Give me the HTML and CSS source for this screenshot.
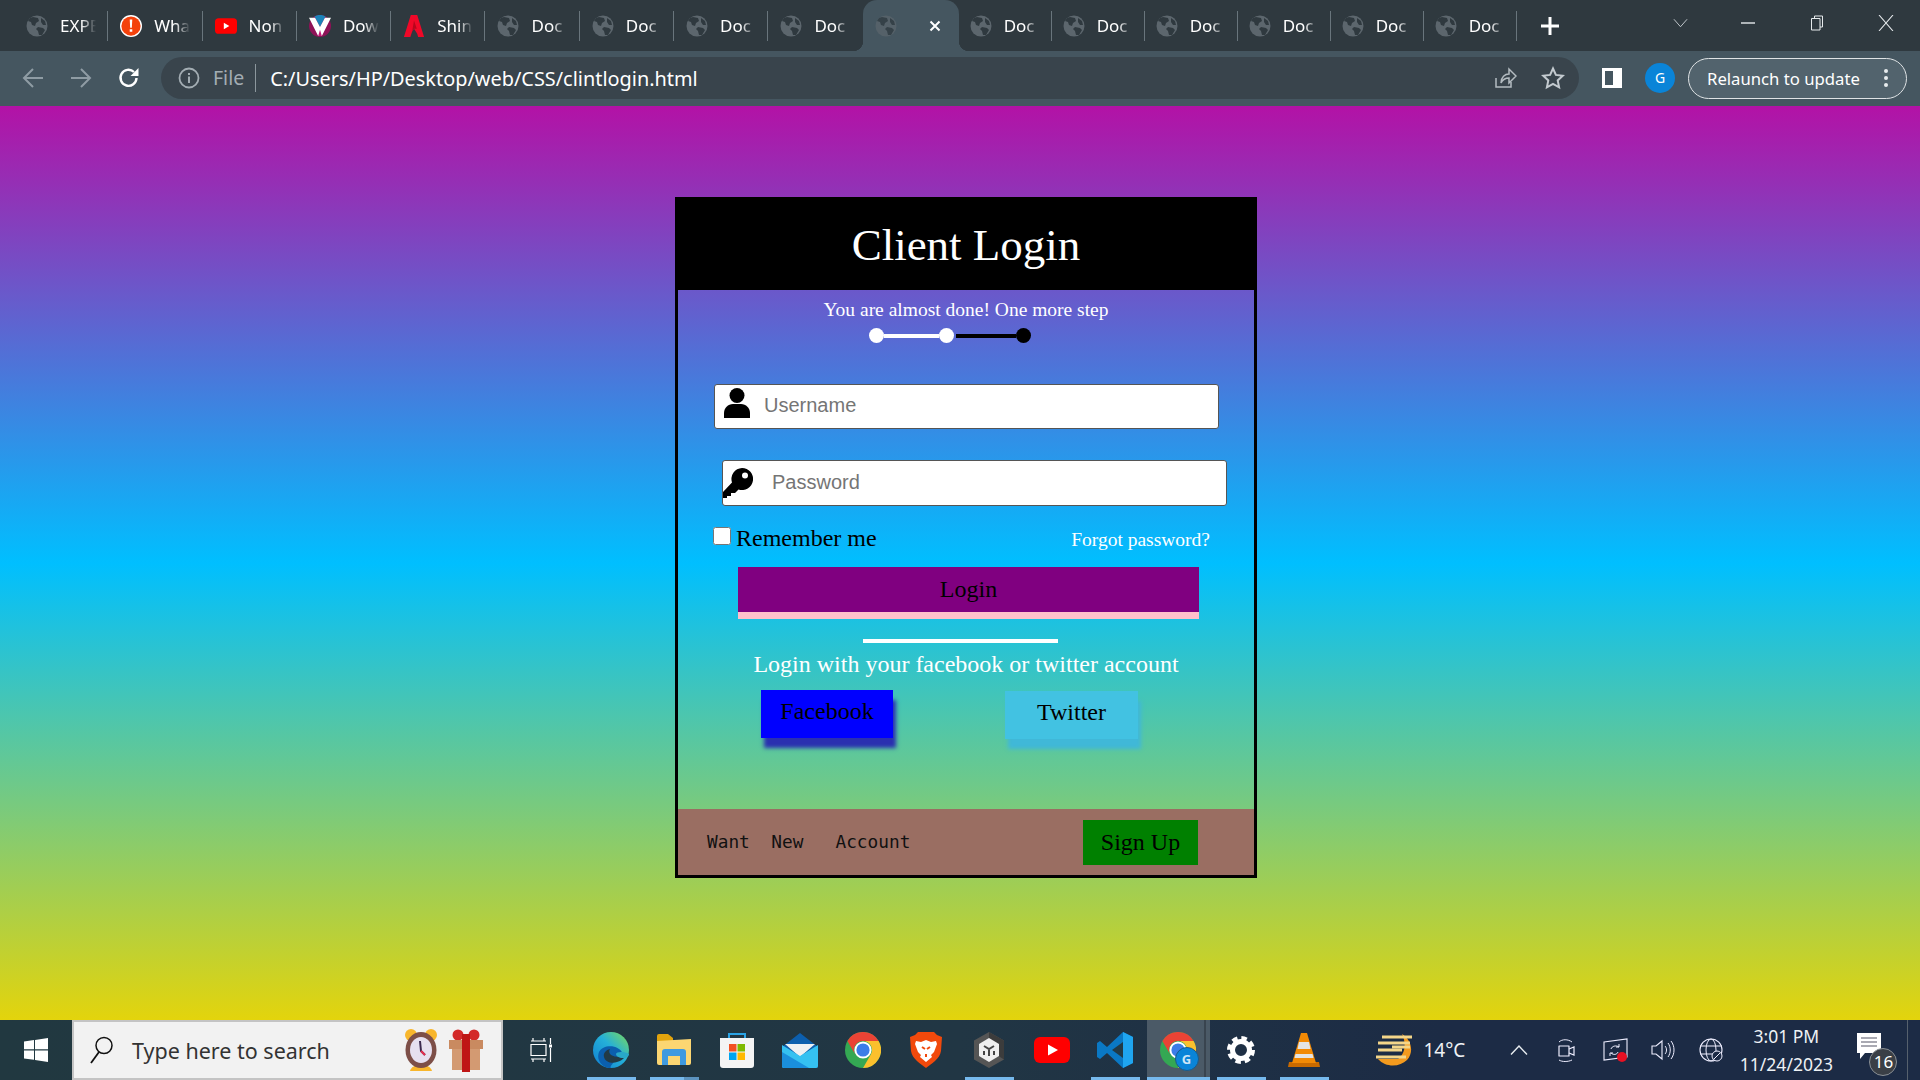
FILE: index.html
```html
<!DOCTYPE html>
<html>
<head>
    <title>Client Login</title>
    <link rel="stylesheet" href="styles.css">
</head>
<body>
    <svg class="defs" width="0" height="0">
        <symbol id="globe" viewBox="0 0 22 22">
            <circle cx="11" cy="11" r="10.5" fill="#5c666d"/>
            <path d="M7 2l5 1 1 3-3 2-1 3-3-1-1-3-3-1 2-3zM12 12l5 1 2 2-3 5-3 0-1-4-2-2zM15 3l4 3 1 4-3 0-2-3z" fill="#2f393f"/>
        </symbol>
        <symbol id="chrome" viewBox="0 0 36 36">
            <circle cx="18" cy="18" r="18" fill="#34a853"/>
            <path d="M33.6 9A18 18 0 0 1 18 36L25.8 22.5A9 9 0 0 0 18 9Z" fill="#fbc02d"/>
            <path d="M18 9H33.6A18 18 0 0 0 2.4 9L10.2 22.5A9 9 0 0 1 18 9Z" fill="#ea4335"/>
            <circle cx="18" cy="18" r="8.6" fill="#fff"/>
            <circle cx="18" cy="18" r="6.6" fill="#3b7de8"/>
        </symbol>
    </svg>

    <div class="tabstrip">
        <div class="tab"><svg class="favicon"><use href="#globe"/></svg><span class="tab-title">EXPE</span></div>
        <div class="tab">
            <svg class="favicon" viewBox="0 0 24 24"><circle cx="12" cy="12" r="12" fill="#fff"/><circle cx="12" cy="12" r="10.5" fill="#f4410b"/><path d="M10.6 5h2.8l-.5 9h-1.8zM10.6 15.6h2.8v2.8h-2.8z" fill="#fff"/></svg>
            <span class="tab-title">Wha</span>
        </div>
        <div class="tab">
            <svg class="favicon" viewBox="0 0 24 24"><rect y="3.5" width="24" height="17" rx="4" fill="#f00"/><path d="M9.6 8.5l6 3.5-6 3.5z" fill="#fff"/></svg>
            <span class="tab-title">Non</span>
        </div>
        <div class="tab">
            <svg class="favicon" viewBox="0 0 24 24"><circle cx="12" cy="12" r="12" fill="#8e1257"/><path d="M6 1.6a12 12 0 0 1 12 0L12 13z" fill="#1b83b8"/><path d="M0 3h6.6L12 13l5.4-10H24L14 23h-4z" fill="#fff"/><path d="M12 16l2 7h-4z" fill="#c51a78"/></svg>
            <span class="tab-title">Dow</span>
        </div>
        <div class="tab">
            <svg class="favicon" viewBox="0 0 22 24"><path d="M7.5 0h7L22 24h-6.5l-1-3.5L11 15l-2 3-2 6H0z" fill="#f00828"/><path d="M11 6l3 9-3 0-2 3z" fill="#b8051c"/></svg>
            <span class="tab-title">Shin</span>
        </div>
        <div class="tab"><svg class="favicon"><use href="#globe"/></svg><span class="tab-title">Doc</span></div>
        <div class="tab"><svg class="favicon"><use href="#globe"/></svg><span class="tab-title">Doc</span></div>
        <div class="tab"><svg class="favicon"><use href="#globe"/></svg><span class="tab-title">Doc</span></div>
        <div class="tab tab-last"><svg class="favicon"><use href="#globe"/></svg><span class="tab-title">Doc</span></div>
        <div class="tab tab-active">
            <svg class="favicon"><use href="#globe"/></svg>
            <svg class="tab-close" viewBox="0 0 12 12"><path d="M1.5 1.5l9 9M10.5 1.5l-9 9" stroke="#fff" stroke-width="2"/></svg>
        </div>
        <div class="tab"><svg class="favicon"><use href="#globe"/></svg><span class="tab-title">Doc</span></div>
        <div class="tab"><svg class="favicon"><use href="#globe"/></svg><span class="tab-title">Doc</span></div>
        <div class="tab"><svg class="favicon"><use href="#globe"/></svg><span class="tab-title">Doc</span></div>
        <div class="tab"><svg class="favicon"><use href="#globe"/></svg><span class="tab-title">Doc</span></div>
        <div class="tab"><svg class="favicon"><use href="#globe"/></svg><span class="tab-title">Doc</span></div>
        <div class="tab"><svg class="favicon"><use href="#globe"/></svg><span class="tab-title">Doc</span></div>
        <svg class="new-tab" viewBox="0 0 18 18"><path d="M9 0v18M0 9h18" stroke="#fff" stroke-width="3"/></svg>
        <svg class="tab-search" viewBox="0 0 16 10"><path d="M1 1l7 8 7-8" fill="none" stroke="#c8ced2" stroke-width="1"/></svg>
        <svg class="win-btn" viewBox="0 0 16 16"><path d="M1 8h14" stroke="#e6eaec" stroke-width="1.4"/></svg>
        <svg class="win-btn" viewBox="0 0 16 16"><path d="M5.5 3V1h8v11h-2.5M2.5 3.5h8.500v11.500h-8.500z" fill="none" stroke="#e6eaec" stroke-width="1"/></svg>
        <svg class="win-btn" viewBox="0 0 16 16"><path d="M1 0l14 16M15 0L1 16" stroke="#e6eaec" stroke-width="1.1"/></svg>
    </div>

    <div class="toolbar">
        <svg class="nav-icon" viewBox="0 0 22 22"><path d="M21 11H2M11 2l-9 9 9 9" fill="none" stroke="#8f9ca4" stroke-width="2"/></svg>
        <svg class="nav-icon" viewBox="0 0 22 22"><path d="M1 11h19M11 2l9 9-9 9" fill="none" stroke="#8f9ca4" stroke-width="2"/></svg>
        <svg class="nav-icon" viewBox="0 0 22 22"><path d="M18.5 11a8 8 0 1 1-2.500-6" fill="none" stroke="#fff" stroke-width="2.4"/><path d="M20.5 1v8h-8z" fill="#fff"/></svg>
        <div class="omnibox">
            <svg class="info-icon" viewBox="0 0 22 22"><circle cx="11" cy="11" r="9.5" fill="none" stroke="#a3adb3" stroke-width="1.8"/><path d="M10 9.500h2V16h-2zM10 6h2v2h-2z" fill="#a3adb3"/></svg>
            <span class="scheme">File</span>
            <span class="url">C:/Users/HP/Desktop/web/CSS/clintlogin.html</span>
            <svg class="share-icon" viewBox="0 0 24 24"><path d="M3 12v9h15v-5" fill="none" stroke="#b4bcc1" stroke-width="1.5"/><path d="M8 17c0-6 4-9 8-9V3l7 7-7 7v-5c-3 0-6 1-8 5z" fill="none" stroke="#b4bcc1" stroke-width="1.5"/></svg>
            <svg class="star-icon" viewBox="0 0 24 24"><path d="M12 2.500l2.900 6.400 6.900.8-5.100 4.700 1.400 6.900-6.100-3.500-6.100 3.500 1.400-6.900-5.100-4.700 6.900-.8z" fill="none" stroke="#c3cacf" stroke-width="2"/></svg>
        </div>
        <svg class="panel-icon" viewBox="0 0 20 20"><path d="M0 0h20v20H0z" fill="#fff"/><path d="M3 3h8v14H3z" fill="#455660"/></svg>
        <div class="avatar">G</div>
        <div class="relaunch">
            <span>Relaunch to update</span>
            <svg class="dots" viewBox="0 0 4 18"><circle cx="2" cy="2" r="2" fill="#e8ecee"/><circle cx="2" cy="9" r="2" fill="#e8ecee"/><circle cx="2" cy="16" r="2" fill="#e8ecee"/></svg>
        </div>
    </div>

    <main class="page">
        <div class="card">
            <h1 class="card-title">Client Login</h1>
            <div class="card-body">
                <p class="step-text">You are almost done! One more step</p>
                <div class="steps">
                    <span class="dot"></span>
                    <span class="bar bar-done"></span>
                    <span class="dot"></span>
                    <span class="bar bar-todo"></span>
                    <span class="dot dot-todo"></span>
                </div>
                <div class="field field-user">
                    <svg class="field-icon user-icon" viewBox="0 0 26 30"><circle cx="13" cy="7.500" r="7.500"/><path d="M0 30v-5c0-5 4-9 9-9h8c5 0 9 4 9 9v5z"/></svg>
                    <input type="text" placeholder="Username">
                </div>
                <div class="field field-pass">
                    <svg class="field-icon key-icon" viewBox="0 0 30 30"><path d="M19 0a11 11 0 1 1-3.500 21.400L12 25H8v3H4v2H0v-6l9-9.500A11 11 0 0 1 19 0z"/><circle cx="22" cy="7.500" r="3" fill="#fff"/></svg>
                    <input type="password" placeholder="Password">
                </div>
                <div class="options">
                    <label class="remember"><input type="checkbox">Remember me</label>
                    <a class="forgot">Forgot password?</a>
                </div>
                <button class="login-btn" type="button">Login</button>
                <div class="divider"></div>
                <p class="social-text">Login with your facebook or twitter account</p>
                <div class="social">
                    <button class="fb-btn" type="button">Facebook</button>
                    <button class="tw-btn" type="button">Twitter</button>
                </div>
            </div>
            <div class="card-footer">
                <span class="want">Want  New   Account</span>
                <button class="signup-btn" type="button">Sign Up</button>
            </div>
        </div>
    </main>

    <div class="taskbar">
        <div class="start">
            <svg class="win-logo" viewBox="0 0 24 24"><path d="M0 3.500l10-1.400v9.200H0zM11 2l13-2v11.300H11zM0 12.400h10v9.400L0 20.400zM11 12.400h13V24l-13-2z" fill="#fff"/></svg>
        </div>
        <div class="search">
            <svg class="search-icon" viewBox="0 0 26 30"><circle cx="15" cy="10.500" r="8" fill="none" stroke="#111" stroke-width="1.5"/><path d="M10 17L2 28" stroke="#111" stroke-width="1.8"/></svg>
            <span class="search-text">Type here to search</span>
            <svg class="alarm" viewBox="0 0 34 44">
                <circle cx="7" cy="7" r="6" fill="#f8b62c"/><circle cx="27" cy="7" r="6" fill="#f8b62c"/>
                <path d="M6 43c1-4 5-6 11-6s10 2 11 6z" fill="#f8b62c"/>
                <ellipse cx="17" cy="22" rx="15.500" ry="18" fill="#7d4f48"/>
                <ellipse cx="17" cy="22" rx="11" ry="13" fill="#e6e0f0"/>
                <path d="M16 13l1 10 4 4" fill="none" stroke="#3b2a50" stroke-width="2"/><path d="M17 23l4 4" stroke="#e83050" stroke-width="2"/>
            </svg>
            <svg class="gift" viewBox="0 0 34 44">
                <circle cx="9" cy="7" r="5.500" fill="#d32a2a"/><circle cx="25" cy="7" r="5.500" fill="#d32a2a"/>
                <path d="M3 16h28v26H3z" fill="#d39a72"/><path d="M0 12h34v9H0z" fill="#c98a60"/>
                <path d="M13 6h8v38h-8z" fill="#bf1616"/>
            </svg>
        </div>
        <div class="task-view">
            <svg class="taskview-icon" viewBox="0 0 24 24"><path d="M2 3h15M4 0v3M15 0v3M2 6.500h15v11H2zM2 21h15M4 21v3M15 21v3M21.500 0v6M21.500 10v14" fill="none" stroke="#fff" stroke-width="1.2"/><path d="M20 6.500h3v3h-3z" fill="#fff"/></svg>
        </div>

        <div class="slot slot-on">
            <svg class="app" viewBox="0 0 36 36">
                <defs><linearGradient id="edgeGrad" x1="0" y1="1" x2="1" y2="0"><stop offset="0" stop-color="#0f7fd2"/><stop offset=".55" stop-color="#25b0d8"/><stop offset="1" stop-color="#7fdc55"/></linearGradient></defs>
                <circle cx="18" cy="18" r="18" fill="url(#edgeGrad)"/>
                <path d="M6 20c4-8 20-8 24 2 1 3-2 5-6 4-3 4-8 9-6 10C9 36 3 28 6 20z" fill="#0b5fae"/>
                <path d="M17 17c-4 1-7 4-6 8 1 5 8 7 13 5 4-1 8-4 9-7-1 1-4 2-7 2-6 0-12-3-9-8z" fill="#223a46"/>
                <path d="M36 22c0 2-2 4-6 4s-7-2-7-4 7-3 13 0z" fill="#28a8c8"/>
            </svg>
        </div>
        <div class="slot slot-on slot-grouped">
            <svg class="app" viewBox="0 0 36 36">
                <path d="M1 4a2 2 0 0 1 2-2h9l5 4v5H1z" fill="#e2a40d"/>
                <path d="M1 9l34-2v24a2 2 0 0 1-2 2H3a2 2 0 0 1-2-2z" fill="#fcd672"/>
                <path d="M6 33V20a3 3 0 0 1 3-3h18a3 3 0 0 1 3 3v13h-6V24H12v9z" fill="#3f9ae0"/>
            </svg>
        </div>
        <div class="slot">
            <svg class="app" viewBox="0 0 36 36">
                <path d="M10 8V2h16v6" fill="none" stroke="#2ba4e6" stroke-width="2"/>
                <path d="M1 6h34v27a3 3 0 0 1-3 3H4a3 3 0 0 1-3-3z" fill="#f4f4f4"/>
                <path d="M10 12h7.500v7.500H10z" fill="#f25022"/><path d="M18.500 12H26v7.500h-7.500z" fill="#7fba00"/>
                <path d="M10 20.500h7.500V28H10z" fill="#00a4ef"/><path d="M18.500 20.500H26V28h-7.500z" fill="#ffb900"/>
            </svg>
        </div>
        <div class="slot">
            <svg class="app" viewBox="0 0 36 36">
                <path d="M0 15L18 1l18 14v19a2 2 0 0 1-2 2H2a2 2 0 0 1-2-2z" fill="#0c5fae"/>
                <path d="M3 12h30L18 25z" fill="#eef0f2"/>
                <path d="M0 13l18 11 18-11v21a2 2 0 0 1-2 2H2a2 2 0 0 1-2-2z" fill="#35c1f1"/>
                <path d="M0 20l27 16H2a2 2 0 0 1-2-2z" fill="#1a8fdc"/>
            </svg>
        </div>
        <div class="slot"><svg class="app"><use href="#chrome"/></svg></div>
        <div class="slot">
            <svg class="app" viewBox="0 0 32 36">
                <path d="M8 0h16l3 3 5 2-1 14c-1 8-10 13-15 17C11 32 2 27 1 19L0 5l5-2z" fill="#f1490c"/>
                <path d="M6 9l5 1 5-2 5 2 5-1 1 3-3 8-3 3 1 2-6 5-6-5 1-2-3-3-3-8z" fill="#fff"/>
                <path d="M12 15l3 2M20 15l-3 2M16 22v3" stroke="#f1490c" stroke-width="2"/>
            </svg>
        </div>
        <div class="slot slot-on">
            <svg class="app" viewBox="0 0 32 36">
                <path d="M16 0l15 8.500v19L16 36 1 27.500v-19z" fill="#555"/>
                <path d="M16 0l15 8.500v19L16 18z" fill="#3c3c3c"/>
                <path d="M16 6l10 6v12l-10 6-10-6V12z" fill="#eee"/>
                <path d="M16 16v8M11 14l5 3 5-3M11 19v4M21 19v4" stroke="#444" stroke-width="2" fill="none"/>
            </svg>
        </div>
        <div class="slot">
            <svg class="app" viewBox="0 0 36 26"><rect width="36" height="26" rx="6" fill="#f00"/><path d="M14 7.500l10 5.500-10 5.500z" fill="#fff"/></svg>
        </div>
        <div class="slot slot-on">
            <svg class="app" viewBox="0 0 36 36">
                <path d="M26 0l10 5v26l-10 5L10 21 3 27l-3-2v-14l3-2 7 6z" fill="#0a78c4"/>
                <path d="M26 10L15 18l11 8z" fill="#223a46"/>
                <path d="M26 0l10 5v26l-10 5z" fill="#1fa5f0"/>
            </svg>
        </div>
        <div class="slot slot-on slot-active">
            <svg class="app"><use href="#chrome"/></svg>
            <span class="profile-badge">G</span>
        </div>
        <div class="slot slot-on">
            <svg class="app-small" viewBox="0 0 28 28"><circle cx="14" cy="14" r="8.500" fill="none" stroke="#fff" stroke-width="5"/><circle cx="14" cy="14" r="12" fill="none" stroke="#fff" stroke-width="4" stroke-dasharray="5.5 3.925"/></svg>
        </div>
        <div class="slot slot-on">
            <svg class="app" viewBox="0 0 32 36">
                <path d="M1 30h30l1 5H0z" fill="#c96a00"/>
                <path d="M13 1h6l9 30H4z" fill="#f28a05"/>
                <path d="M11 10h10l1.500 7h-13zM7.500 22h17l1 4h-19z" fill="#e4e4e4"/>
            </svg>
        </div>

        <div class="weather">
            <svg class="weather-icon" viewBox="0 0 38 34">
                <path d="M26 1c10 6 12 19 5 26s-21 8-29-1h20c8-6 8-17 4-25z" fill="#f39a1e"/>
                <path d="M6 4h30M2 10h32M16 14h18M0 24h30" stroke="#f4d68a" stroke-width="3"/>
                <path d="M2 17h24" stroke="#f4d68a" stroke-width="3"/>
            </svg>
            <span class="temp">14°C</span>
        </div>
        <div class="tray tray-caret">
            <svg class="tray-chevron" viewBox="0 0 18 10"><path d="M1 9.500L9 1l8 8.500" fill="none" stroke="#e8edf0" stroke-width="1.4"/></svg>
        </div>
        <div class="tray tray-meet">
            <svg class="tray-icon" viewBox="0 0 18 24"><path d="M2 8h10v10H2z" fill="none" stroke="#eef" stroke-width="1.2" stroke-linejoin="round"/><path d="M12 11l5-2v8l-5-2" fill="none" stroke="#eef" stroke-width="1.2"/><path d="M2 4c3-3 9-3 13 0M2 22c3 2 9 2 13 0" fill="none" stroke="#eef" stroke-width="1"/></svg>
        </div>
        <div class="tray tray-sync">
            <svg class="tray-icon tray-wide" viewBox="0 0 26 24"><path d="M1 4l23-3v18L1 22z" fill="none" stroke="#eef" stroke-width="1.1"/><path d="M8 11c1-3 5-4 8-2M15 14c-1 3-5 3-7 1M16 6v3h-3M7 18v-3h3" fill="none" stroke="#eef" stroke-width="1"/><circle cx="19" cy="19" r="5" fill="#e81123"/></svg>
        </div>
        <div class="tray tray-sound">
            <svg class="tray-icon tray-wide" viewBox="0 0 24 24"><path d="M1 8h4l6-5v18l-6-5H1z" fill="none" stroke="#eef" stroke-width="1.1"/><path d="M14 8c2 2 2 6 0 8M17 5c3 4 3 10 0 14M20 3c4 5 4 13 0 18" fill="none" stroke="#eef" stroke-width="1"/></svg>
        </div>
        <div class="tray tray-globe">
            <svg class="tray-icon tray-wide" viewBox="0 0 24 24"><circle cx="12" cy="12" r="11" fill="none" stroke="#eef" stroke-width="1.1"/><ellipse cx="12" cy="12" rx="5" ry="11" fill="none" stroke="#eef" stroke-width="1"/><path d="M1 8h22M1 16h22" stroke="#eef" stroke-width="1"/><circle cx="18" cy="18" r="5" fill="#1c2b45" stroke="#eef"/><path d="M15 21l6-6" stroke="#eef"/></svg>
        </div>
        <div class="clock"><span>3:01 PM</span><span>11/24/2023</span></div>
        <div class="tray tray-notify">
            <svg class="notify-icon" viewBox="0 0 24 26"><path d="M0 0h24v20H8l-5 6v-6H0z" fill="#fff"/><path d="M4 5h16M4 9h16M4 13h16" stroke="#556" stroke-width="1.2"/></svg>
            <span class="notify-count">16</span>
        </div>
        <div class="show-desktop"></div>
    </div>
</body>
</html>
```

FILE: styles.css
```css
* {
    box-sizing: border-box;
}
html,
body {
    margin: 0;
    height: 100%;
}
body {
    display: flex;
    flex-direction: column;
    overflow: hidden;
    font-family: "Liberation Serif", serif;
}
.defs {
    position: absolute;
}

/* browser tabs */
.tabstrip {
    display: flex;
    align-items: center;
    flex: 0 0 51px;
    padding-left: 14px;
    background-color: #2f393f;
    font-family: "Noto Sans", sans-serif;
}
.tab {
    position: relative;
    display: flex;
    align-items: center;
    flex: 0 0 94.3px;
    height: 30px;
    padding-left: 12px;
    border-right: 1px solid #69757c;
    color: #fff;
    font-size: 17px;
}
.tab-last {
    border-right: none;
}
.favicon {
    flex: 0 0 22px;
    width: 22px;
    height: 22px;
}
.tab-title {
    width: 38px;
    margin-left: 12px;
    white-space: nowrap;
    -webkit-mask-image: linear-gradient(to right, #000 55%, transparent 95%);
    mask-image: linear-gradient(to right, #000 55%, transparent 95%);
}
.tab-active {
    flex: 0 0 96px;
    height: 51px;
    background-color: #455660;
    border-right: none;
    border-radius: 14px 14px 0 0;
}
.tab-active ~ .tab {
    flex-basis: 93px;
    padding-left: 11px;
}
.tab-active .favicon {
    opacity: 0.7;
}
.tab-active::before,
.tab-active::after {
    content: "";
    position: absolute;
    bottom: 0;
    width: 10px;
    height: 10px;
}
.tab-active::before {
    left: -10px;
    background: radial-gradient(circle at 0 0, transparent 10px, #455660 10.5px);
}
.tab-active::after {
    right: -10px;
    background: radial-gradient(circle at 100% 0, transparent 10px, #455660 10.5px);
}
.tab-close {
    width: 12px;
    height: 12px;
    margin-left: 32px;
}
.new-tab {
    width: 18px;
    height: 18px;
    margin-left: 24px;
}
.tab-search {
    width: 15px;
    height: 10px;
    margin: -6px 0 0 114px;
}
.win-btn {
    width: 16px;
    height: 16px;
    margin: -6px 0 0 53px;
}
.tab-search + .win-btn {
    margin-left: 52px;
}

/* address bar */
.toolbar {
    display: flex;
    align-items: center;
    flex: 0 0 55px;
    padding: 0 12px 1px 22px;
    background-color: #455660;
    color: #fff;
    font-family: "Noto Sans", sans-serif;
}
.nav-icon {
    width: 22px;
    height: 22px;
    margin-right: 26px;
}
.omnibox {
    display: flex;
    align-items: center;
    width: 1418px;
    height: 42px;
    margin-left: -5px;
    padding: 0 14px 0 17px;
    background-color: #39444c;
    border-radius: 21px;
}
.info-icon {
    width: 22px;
    height: 22px;
}
.scheme {
    margin-left: 13px;
    padding-right: 11px;
    border-right: 1px solid #8c979d;
    color: #a3adb3;
    font-size: 19.5px;
    line-height: 28px;
}
.url {
    flex: 1;
    margin-left: 14px;
    font-size: 19.9px;
    white-space: nowrap;
}
.share-icon {
    width: 24px;
    height: 24px;
    margin-right: 24px;
}
.star-icon {
    width: 24px;
    height: 24px;
}
.panel-icon {
    width: 20px;
    height: 20px;
    margin-left: 23px;
}
.avatar {
    width: 30px;
    height: 30px;
    margin-left: 23px;
    background-color: #0a84d8;
    border-radius: 50%;
    font-size: 14px;
    line-height: 30px;
    text-align: center;
}
.relaunch {
    display: flex;
    align-items: center;
    justify-content: space-between;
    width: 219px;
    height: 41px;
    margin-left: 13px;
    padding: 0 18px;
    background-color: #52636d;
    border: 1px solid #dfe3e5;
    border-radius: 21px;
    font-size: 16.7px;
    white-space: nowrap;
}
.dots {
    width: 4px;
    height: 18px;
}

/* page */
.page {
    flex: 1;
    background: linear-gradient(#b312a6, #00bfff, #e3d40c);
}
.card {
    display: flex;
    flex-direction: column;
    width: 582px;
    height: 681px;
    margin: 91px 0 0 675px;
    border: 3px solid #000;
}
.card-title {
    flex: 0 0 89px;
    margin: 0;
    background-color: #000;
    color: #fff;
    font-size: 45px;
    font-weight: normal;
    line-height: 90px;
    text-align: center;
}
.card-body {
    flex: 1;
}
.step-text {
    margin: 9px 0 0;
    color: #fff;
    font-size: 19.5px;
    line-height: 22px;
    text-align: center;
}
.steps {
    display: flex;
    align-items: center;
    height: 15px;
    margin: 7px 0 0 191px;
}
.dot {
    flex: 0 0 15px;
    height: 15px;
    background-color: #fff;
    border-radius: 50%;
}
.dot-todo {
    background-color: #000;
}
.bar {
    height: 4px;
}
.bar-done {
    width: 55px;
    background-color: #fff;
}
.bar-todo {
    width: 60px;
    margin-left: 2px;
    background-color: #000;
}
.field {
    position: relative;
}
.field input {
    width: 100%;
    height: 100%;
    padding: 0 0 2px 48px;
    border: 1px solid #555;
    border-radius: 3px;
    background-color: #fff;
    font-family: "Liberation Sans", sans-serif;
    font-size: 20px;
}
.field input::placeholder {
    color: #757575;
}
.field-user {
    width: 505px;
    height: 45px;
    margin: 41px 0 0 36px;
}
.field-user input {
    padding-left: 49px;
}
.field-pass {
    width: 505px;
    height: 46px;
    margin: 31px 0 0 44px;
}
.field-pass input {
    padding-left: 49px;
}
.field-icon {
    position: absolute;
    fill: #000;
}
.user-icon {
    top: 4px;
    left: 10px;
    width: 26px;
    height: 30px;
}
.key-icon {
    top: 8px;
    left: 1px;
    width: 30px;
    height: 30px;
}
.options {
    display: flex;
    align-items: center;
    justify-content: space-between;
    width: 497px;
    height: 28px;
    margin: 18px 0 0 35px;
}
.remember {
    display: flex;
    align-items: center;
    font-size: 24px;
}
.remember input {
    width: 18px;
    height: 18px;
    margin: -4px 5px 0 0;
}
.forgot {
    margin-top: 3px;
    color: #fff;
    font-size: 19.5px;
}
button {
    padding: 0;
    border: none;
    color: #000;
    font-family: "Liberation Serif", serif;
    font-size: 24px;
}
.login-btn {
    display: block;
    width: 461px;
    height: 52px;
    margin: 15px 0 0 60px;
    background-color: #800080;
    border-bottom: 7px solid #ffc0cb;
}
.divider {
    width: 195px;
    height: 4px;
    margin: 20px 0 0 185px;
    background-color: #fff;
}
.social-text {
    margin: 7px 0 0;
    color: #fff;
    font-size: 24px;
    line-height: 28px;
    text-align: center;
}
.social {
    display: flex;
    align-items: flex-start;
    margin: 12px 0 0 83px;
}
.fb-btn {
    width: 132px;
    height: 48px;
    padding-bottom: 6px;
    background-color: #00f;
    box-shadow: 3px 10px 4px #2a2fb0;
}
.tw-btn {
    width: 133px;
    height: 48px;
    margin: 1px 0 0 112px;
    padding-bottom: 6px;
    background-color: #42c2e2;
    box-shadow: 3px 10px 4px #40b8d8;
}
.card-footer {
    display: flex;
    align-items: center;
    flex: 0 0 66px;
    padding-left: 29px;
    background-color: #9a6e62;
}
.want {
    margin-bottom: 2px;
    color: #111;
    font-family: "DejaVu Sans Mono", monospace;
    font-size: 17.8px;
    white-space: pre;
}
.signup-btn {
    width: 115px;
    height: 45px;
    margin-left: auto;
    margin-right: 56px;
    background-color: #008000;
}

/* windows taskbar */
.taskbar {
    display: flex;
    align-items: center;
    flex: 0 0 60px;
    background: linear-gradient(to right, #213840, #213644 50%, #1c2b45 75%);
    color: #eef2f5;
    font-family: "Noto Sans", sans-serif;
}
.start {
    display: flex;
    align-items: center;
    justify-content: center;
    flex: 0 0 72px;
}
.win-logo {
    width: 24px;
    height: 24px;
}
.search {
    display: flex;
    align-items: center;
    flex: 0 0 431px;
    height: 60px;
    padding-left: 15px;
    background-color: #f2f2f2;
    border: 2px solid #c4c4c4;
    color: #333;
}
.search-icon {
    width: 26px;
    height: 30px;
}
.search-text {
    margin-left: 17px;
    font-size: 21.5px;
    white-space: nowrap;
}
.alarm {
    width: 34px;
    height: 44px;
    margin-left: 74px;
}
.gift {
    width: 34px;
    height: 44px;
    margin-left: 11px;
}
.task-view {
    display: flex;
    justify-content: center;
    flex: 0 0 76.5px;
}
.taskview-icon {
    width: 24px;
    height: 24px;
}
.slot {
    position: relative;
    display: flex;
    align-items: center;
    justify-content: center;
    flex: 0 0 63px;
    height: 60px;
}
.slot-on::after {
    content: "";
    position: absolute;
    left: 7px;
    bottom: 0;
    width: 49px;
    height: 3px;
    background-color: #76b9ed;
}
.slot-active {
    background-color: #4b5a67;
}
.slot-active::before {
    content: "";
    position: absolute;
    top: 0;
    right: 4px;
    width: 2px;
    height: 60px;
    background-color: #39444f;
}
.slot-active::after {
    left: 0;
    width: 63px;
}
.slot-grouped::after {
    background: linear-gradient(to right, #76b9ed 70%, #5c93bf 70%);
}
.app {
    width: 36px;
    height: 36px;
}
.app-small {
    width: 28px;
    height: 28px;
}
.profile-badge {
    position: absolute;
    left: 28px;
    top: 27px;
    width: 24px;
    height: 24px;
    background-color: #0a84d8;
    border: 1px solid #1c5a88;
    border-radius: 50%;
    color: #cfe6f7;
    font-size: 13px;
    font-weight: 700;
    line-height: 22px;
    text-align: center;
}
.weather {
    display: flex;
    align-items: center;
    margin-left: 40px;
}
.weather-icon {
    width: 38px;
    height: 34px;
}
.temp {
    margin-left: 10px;
    font-size: 19px;
    white-space: nowrap;
}
.tray {
    display: flex;
    align-items: center;
    justify-content: center;
}
.tray-caret {
    flex: 0 0 48px;
    margin-left: 30px;
}
.tray-meet {
    flex: 0 0 46px;
}
.tray-sync {
    flex: 0 0 54px;
}
.tray-sound {
    flex: 0 0 40px;
}
.tray-globe {
    flex: 0 0 56px;
}
.tray-chevron {
    width: 18px;
    height: 10px;
}
.tray-icon {
    width: 18px;
    height: 24px;
}
.tray-wide {
    width: 26px;
}
.clock {
    display: flex;
    flex-direction: column;
    align-items: center;
    flex: 0 0 94px;
    gap: 5px;
    font-size: 17.5px;
    line-height: 23px;
    white-space: nowrap;
}
.tray-notify {
    position: relative;
    flex: 0 0 72px;
    height: 60px;
}
.notify-icon {
    width: 24px;
    height: 26px;
    margin-top: -8px;
}
.notify-count {
    position: absolute;
    left: 36px;
    top: 28px;
    width: 28px;
    height: 28px;
    background-color: #3a3f46;
    border: 1px solid #8a9096;
    border-radius: 50%;
    color: #fff;
    font-size: 17px;
    line-height: 26px;
    text-align: center;
}
.show-desktop {
    width: 1px;
    height: 60px;
    margin-left: 2px;
    background-color: #56616d;
}
```
